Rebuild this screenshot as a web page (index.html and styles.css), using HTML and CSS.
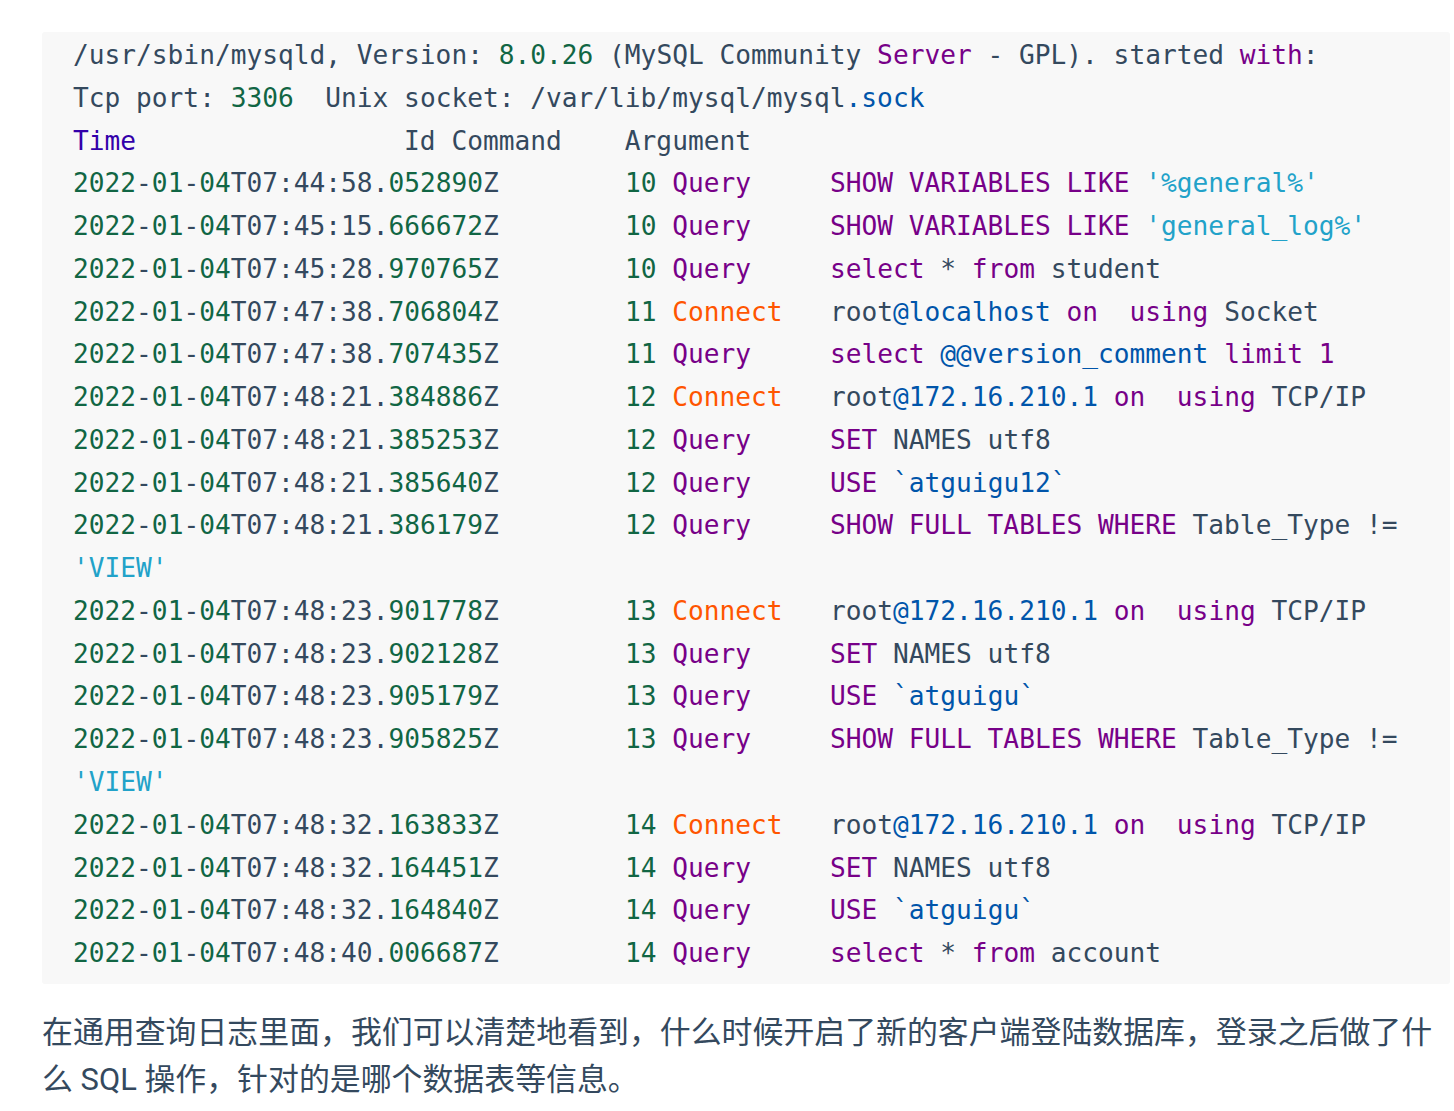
FILE: index.html
```html
<!DOCTYPE html>
<html lang="zh-CN">
<head>
    <meta charset="UTF-8">
    <title>通用查询日志</title>
    <link rel="stylesheet" href="styles.css">
</head>
<body>
    <div id="content">
<pre class="code-block"><code>/usr/sbin/mysqld, Version: <span class="num">8.0.26</span> (MySQL Community <span class="kw">Server</span> - GPL). started <span class="kw">with</span>:
Tcp port: <span class="num">3306</span>  Unix socket: /var/lib/mysql/mysql<span class="var">.sock</span>
<span class="atom">Time</span>                 Id Command    Argument
<span class="num">2022</span>-<span class="num">01</span>-<span class="num">04</span>T07:44:58.<span class="num">052890</span>Z        <span class="num">10</span> <span class="kw">Query</span>     <span class="kw">SHOW VARIABLES LIKE</span> <span class="str">'%general%'</span>
<span class="num">2022</span>-<span class="num">01</span>-<span class="num">04</span>T07:45:15.<span class="num">666672</span>Z        <span class="num">10</span> <span class="kw">Query</span>     <span class="kw">SHOW VARIABLES LIKE</span> <span class="str">'general_log%'</span>
<span class="num">2022</span>-<span class="num">01</span>-<span class="num">04</span>T07:45:28.<span class="num">970765</span>Z        <span class="num">10</span> <span class="kw">Query</span>     <span class="kw">select</span> * <span class="kw">from</span> student
<span class="num">2022</span>-<span class="num">01</span>-<span class="num">04</span>T07:47:38.<span class="num">706804</span>Z        <span class="num">11</span> <span class="conn">Connect</span>   root<span class="var">@localhost</span> <span class="kw">on</span>  <span class="kw">using</span> Socket
<span class="num">2022</span>-<span class="num">01</span>-<span class="num">04</span>T07:47:38.<span class="num">707435</span>Z        <span class="num">11</span> <span class="kw">Query</span>     <span class="kw">select</span> <span class="var">@@version_comment</span> <span class="kw">limit 1</span>
<span class="num">2022</span>-<span class="num">01</span>-<span class="num">04</span>T07:48:21.<span class="num">384886</span>Z        <span class="num">12</span> <span class="conn">Connect</span>   root<span class="var">@172.16.210.1</span> <span class="kw">on</span>  <span class="kw">using</span> TCP/IP
<span class="num">2022</span>-<span class="num">01</span>-<span class="num">04</span>T07:48:21.<span class="num">385253</span>Z        <span class="num">12</span> <span class="kw">Query</span>     <span class="kw">SET</span> NAMES utf8
<span class="num">2022</span>-<span class="num">01</span>-<span class="num">04</span>T07:48:21.<span class="num">385640</span>Z        <span class="num">12</span> <span class="kw">Query</span>     <span class="kw">USE</span> <span class="var">`atguigu12`</span>
<span class="num">2022</span>-<span class="num">01</span>-<span class="num">04</span>T07:48:21.<span class="num">386179</span>Z        <span class="num">12</span> <span class="kw">Query</span>     <span class="kw">SHOW FULL TABLES WHERE</span> Table_Type != <span class="str">'VIEW'</span>
<span class="num">2022</span>-<span class="num">01</span>-<span class="num">04</span>T07:48:23.<span class="num">901778</span>Z        <span class="num">13</span> <span class="conn">Connect</span>   root<span class="var">@172.16.210.1</span> <span class="kw">on</span>  <span class="kw">using</span> TCP/IP
<span class="num">2022</span>-<span class="num">01</span>-<span class="num">04</span>T07:48:23.<span class="num">902128</span>Z        <span class="num">13</span> <span class="kw">Query</span>     <span class="kw">SET</span> NAMES utf8
<span class="num">2022</span>-<span class="num">01</span>-<span class="num">04</span>T07:48:23.<span class="num">905179</span>Z        <span class="num">13</span> <span class="kw">Query</span>     <span class="kw">USE</span> <span class="var">`atguigu`</span>
<span class="num">2022</span>-<span class="num">01</span>-<span class="num">04</span>T07:48:23.<span class="num">905825</span>Z        <span class="num">13</span> <span class="kw">Query</span>     <span class="kw">SHOW FULL TABLES WHERE</span> Table_Type != <span class="str">'VIEW'</span>
<span class="num">2022</span>-<span class="num">01</span>-<span class="num">04</span>T07:48:32.<span class="num">163833</span>Z        <span class="num">14</span> <span class="conn">Connect</span>   root<span class="var">@172.16.210.1</span> <span class="kw">on</span>  <span class="kw">using</span> TCP/IP
<span class="num">2022</span>-<span class="num">01</span>-<span class="num">04</span>T07:48:32.<span class="num">164451</span>Z        <span class="num">14</span> <span class="kw">Query</span>     <span class="kw">SET</span> NAMES utf8
<span class="num">2022</span>-<span class="num">01</span>-<span class="num">04</span>T07:48:32.<span class="num">164840</span>Z        <span class="num">14</span> <span class="kw">Query</span>     <span class="kw">USE</span> <span class="var">`atguigu`</span>
<span class="num">2022</span>-<span class="num">01</span>-<span class="num">04</span>T07:48:40.<span class="num">006687</span>Z        <span class="num">14</span> <span class="kw">Query</span>     <span class="kw">select</span> * <span class="kw">from</span> account</code></pre>
        <p class="note">在通用查询日志里面，我们可以清楚地看到，什么时候开启了新的客户端登陆数据库，登录之后做了什么 SQL 操作，针对的是哪个数据表等信息。</p>
    </div>
</body>
</html>
```

FILE: styles.css
```css
body {
    margin: 0;
    padding: 0;
    background-color: #fff;
    color: #34495e;
}
#content {
    width: 1408px;
    padding: 32px 0 0 42px;
}
.code-block {
    margin: 0;
    padding: 2px 31px 9px 31px;
    background-color: #f8f8f8;
    border-radius: 3px;
    font-family: "DejaVu Sans Mono", "Liberation Mono", monospace;
    font-size: 26.2px;
    line-height: 42.76px;
    color: #34495e;
    white-space: pre-wrap;
    tab-size: 8;
}
.num { color: #116644; }
.kw { color: #770088; }
.var { color: #0055aa; }
.str { color: #22a2c9; }
.conn { color: #ff5500; }
.atom { color: #3300aa; }
.note {
    margin: 25px 0 0 0;
    font-family: Roboto, "Noto Sans CJK SC", sans-serif;
    font-size: 30.9px;
    line-height: 47px;
    color: #34495e;
}
```
